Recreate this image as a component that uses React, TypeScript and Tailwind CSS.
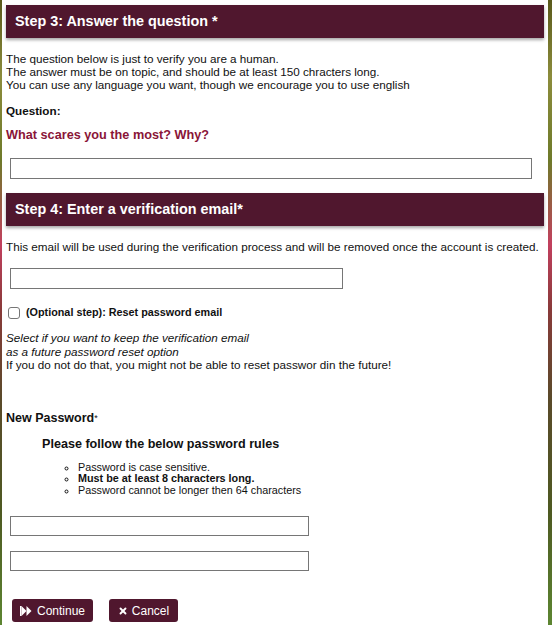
import { X } from "lucide-react";

const FastForward = () => (
  <svg width="12" height="10" viewBox="0 0 12 10" fill="white">
    <rect x="0" y="0" width="1.5" height="10" />
    <polygon points="1.5,0 6.5,5 1.5,10" />
    <polygon points="6.5,0 11.5,5 6.5,10" />
  </svg>
);

export default function App() {
  return (
    <div className="min-h-[625px] bg-[linear-gradient(to_bottom,#5a5a1c_0%,#8c8c3c_12%,#6e7a2a_25%,#c2405e_38%,#8a3a3a_48%,#5a4a2a_62%,#4e5a22_80%,#5f8c34_100%)] font-['Liberation_Sans',Arial,sans-serif] text-[#111]">
      <div className="ml-[2px] w-[546px] bg-white pt-[5px] pb-[20px] px-[4px]">
        <div className="h-[33px] bg-[#50172e] text-white font-bold text-[14.4px] flex items-center pl-[9px] shadow-[0_2px_3px_rgba(0,0,0,0.35)]">
          Step 3: Answer the question *
        </div>

        <p className="mt-[14px] text-[11.7px] leading-[13px]">
          The question below is just to verify you are a human.
          <br />
          The answer must be on topic, and should be at least 150 chracters long.
          <br />
          You can use any language you want, though we encourage you to use english
        </p>

        <p className="mt-[13px] text-[11.7px] leading-[14px] font-bold">Question:</p>
        <p className="mt-[10px] text-[12.7px] leading-[15px] font-bold text-[#8a1538]">
          What scares you the most? Why?
        </p>
        <input type="text" className="block mt-[15px] ml-[4px] w-[522px] h-[21px] border border-[#767676] bg-white" />

        <div className="mt-[14px] h-[33px] bg-[#50172e] text-white font-bold text-[14.4px] flex items-center pl-[9px] shadow-[0_2px_3px_rgba(0,0,0,0.35)]">
          Step 4: Enter a verification email*
        </div>

        <p className="mt-[14px] text-[11.7px] leading-[13px] whitespace-nowrap">
          This email will be used during the verification process and will be removed once the account is created.
        </p>
        <input type="email" className="block mt-[15px] ml-[4px] w-[333px] h-[21px] border border-[#767676] bg-white" />

        <label className="mt-[17px] ml-[2px] flex items-center gap-[6px] h-[13px]">
          <span className="w-[12px] h-[12px] rounded-[3px] border border-[#767676] bg-white" />
          <span className="text-[10.8px] font-bold">(Optional step): Reset password email</span>
        </label>

        <p className="mt-[12px] text-[11.7px] leading-[13.5px]">
          <i>Select if you want to keep the verification email</i>
          <br />
          <i>as a future password reset option</i>
          <br />
          If you do not do that, you might not be able to reset passwor din the future!
        </p>

        <p className="mt-[39px] text-[12.5px] leading-[14px] font-bold">
          New Password<span className="text-[9px] font-normal align-top">*</span>
        </p>
        <p className="mt-[12px] ml-[36px] text-[12.6px] leading-[15px] font-bold">
          Please follow the below password rules
        </p>
        <ul className="mt-[10px] ml-[72px] text-[10.8px] leading-[11.5px] list-[circle] list-outside">
          <li>Password is case sensitive.</li>
          <li className="font-bold">Must be at least 8 characters long.</li>
          <li>Password cannot be longer then 64 characters</li>
        </ul>

        <input type="password" className="block mt-[20px] ml-[4px] w-[299px] h-[20px] border border-[#767676] bg-white" />
        <input type="password" className="block mt-[15px] ml-[4px] w-[299px] h-[20px] border border-[#767676] bg-white" />

        <div className="mt-[28px] ml-[6px] flex gap-[16px]">
          <button className="w-[81px] h-[23px] rounded-[3px] bg-[#50172e] text-white text-[12px] flex items-center justify-center gap-[5px]">
            <FastForward />
            Continue
          </button>
          <button className="w-[69px] h-[23px] rounded-[3px] bg-[#50172e] text-white text-[12px] flex items-center justify-center gap-[4px]">
            <X size={10} strokeWidth={4.5} />
            Cancel
          </button>
        </div>
      </div>
    </div>
  );
}
